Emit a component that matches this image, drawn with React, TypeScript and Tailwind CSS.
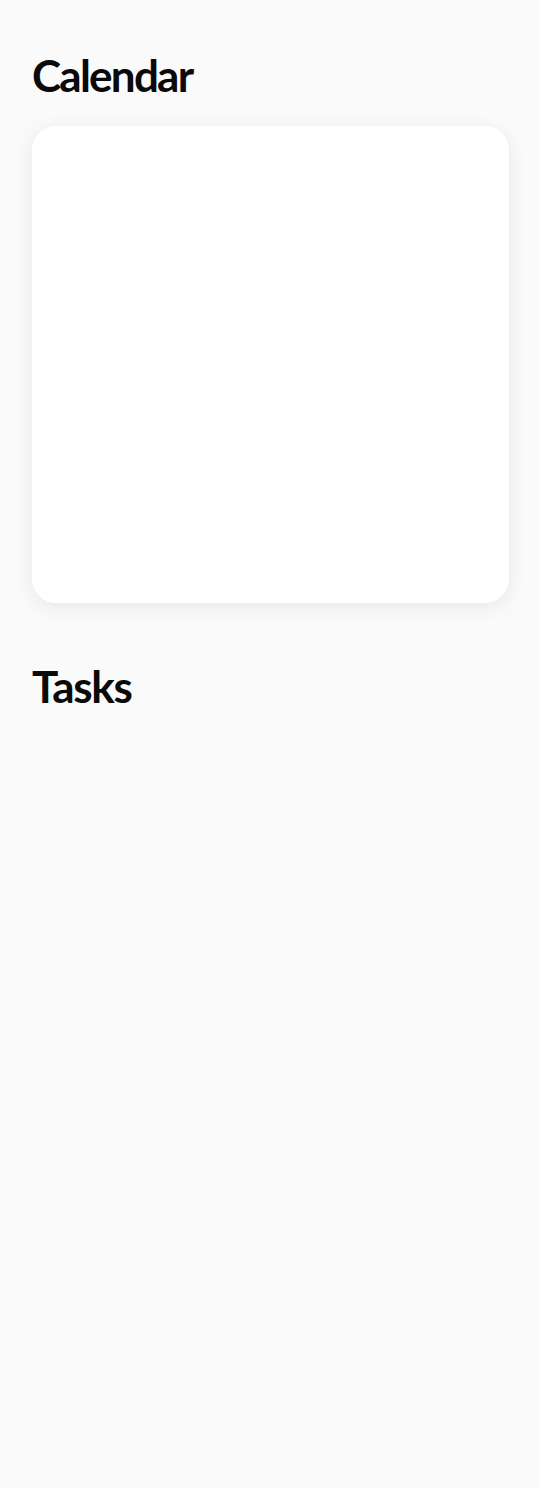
import React from 'react';

export default function App() {
  return (
    <div
      className="min-h-[1488px] bg-[#fafafa] px-8 pt-12"
      style={{ fontFamily: 'Lato, "Noto Sans", sans-serif' }}
    >
      <section>
        <h1 className="text-[44px] font-bold leading-[54px] tracking-[-0.04em] text-[#0a0a0a]">Calendar</h1>
        <div className="mt-6 h-[477px] w-[477px] rounded-3xl bg-white shadow-[0_4px_20px_rgba(0,0,0,0.08)]"></div>
      </section>

      <section className="mt-14">
        <h1 className="text-[44px] font-bold leading-[54px] tracking-[-0.03em] text-[#0a0a0a]">Tasks</h1>
      </section>
    </div>
  );
}
